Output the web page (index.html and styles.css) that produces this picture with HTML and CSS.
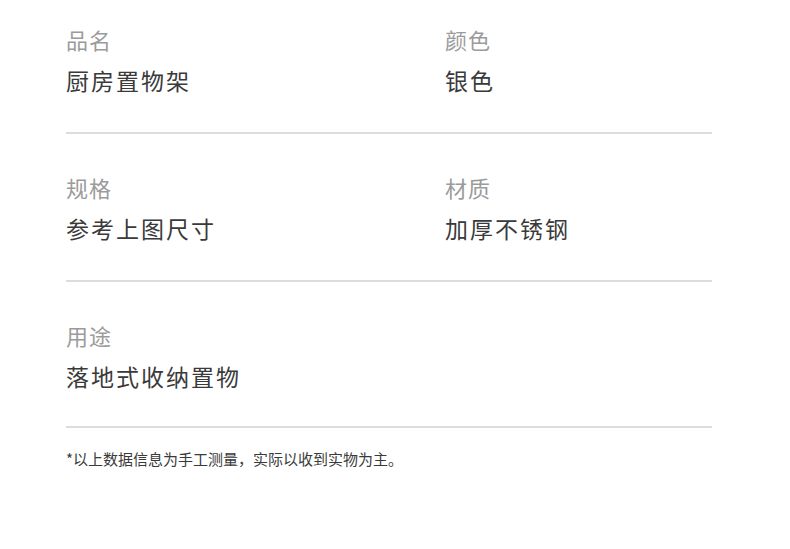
FILE: index.html
```html
<!DOCTYPE html>
<html>
<head>
<meta charset="UTF-8">
<link rel="stylesheet" href="styles.css">
<title>商品参数</title>
</head>
<body>
  <div class="params">
    <div class="spec-row">
      <div class="spec">
        <p class="spec-label">品名</p>
        <p class="spec-value">厨房置物架</p>
      </div>
      <div class="spec">
        <p class="spec-label">颜色</p>
        <p class="spec-value">银色</p>
      </div>
    </div>
    <div class="spec-row">
      <div class="spec">
        <p class="spec-label">规格</p>
        <p class="spec-value">参考上图尺寸</p>
      </div>
      <div class="spec">
        <p class="spec-label">材质</p>
        <p class="spec-value">加厚不锈钢</p>
      </div>
    </div>
    <div class="spec-row">
      <div class="spec">
        <p class="spec-label">用途</p>
        <p class="spec-value">落地式收纳置物</p>
      </div>
    </div>
    <p class="note">*以上数据信息为手工测量，实际以收到实物为主。</p>
  </div>
</body>
</html>
```

FILE: styles.css
```css
body {
  margin: 0;
  background-color: #fff;
  font-family: "Noto Sans CJK SC", "Noto Sans", sans-serif;
}
.params {
  width: 646px;
  margin-left: 66px;
  padding-top: 24px;
}
.spec-row {
  display: grid;
  grid-template-columns: 379px 1fr;
  padding: 38px 0 37px;
  border-bottom: 2px solid #dcdcdc;
}
.spec-row:first-of-type {
  padding-top: 0;
}
.spec-row:last-of-type {
  padding-bottom: 35px;
}
.spec-label {
  margin: 0;
  font-size: 22px;
  line-height: 30px;
  letter-spacing: 1px;
  color: #9b9b9b;
}
.spec-value {
  margin: 11px 0 0;
  font-size: 23px;
  line-height: 30px;
  letter-spacing: 2px;
  color: #3a3a3a;
}
.note {
  margin: 21px 0 0;
  font-size: 15px;
  line-height: 20px;
  color: #3a3a3a;
}
```
